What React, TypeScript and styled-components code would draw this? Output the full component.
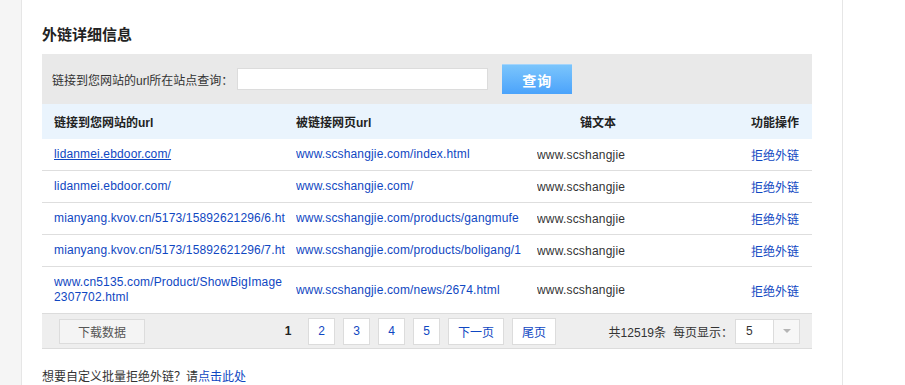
import React, { FC } from 'react';
import styled, { createGlobalStyle } from 'styled-components';

const GlobalStyle = createGlobalStyle`
  html, body {
    margin: 0;
    padding: 0;
    background: #fff;
  }
  body {
    font-family: "Liberation Sans", Arial, "Noto Sans CJK SC", sans-serif;
    font-size: 12px;
    color: #333;
  }
`;

interface ILinkRow {
  source: string;
  target: string;
  anchor: string;
  hovered?: boolean;
}

// urls are shown as the page truncates them
const ROWS: ILinkRow[] = [
  {
    source: 'lidanmei.ebdoor.com/',
    target: 'www.scshangjie.com/index.html',
    anchor: 'www.scshangjie',
    hovered: true,
  },
  {
    source: 'lidanmei.ebdoor.com/',
    target: 'www.scshangjie.com/',
    anchor: 'www.scshangjie',
  },
  {
    source: 'mianyang.kvov.cn/5173/15892621296/6.ht',
    target: 'www.scshangjie.com/products/gangmufe',
    anchor: 'www.scshangjie',
  },
  {
    source: 'mianyang.kvov.cn/5173/15892621296/7.ht',
    target: 'www.scshangjie.com/products/boligang/1',
    anchor: 'www.scshangjie',
  },
  {
    source: 'www.cn5135.com/Product/ShowBigImage2307702.html',
    target: 'www.scshangjie.com/news/2674.html',
    anchor: 'www.scshangjie',
  },
];

const PAGES = ['2', '3', '4', '5', '下一页', '尾页'];

const LINK_BLUE = '#0f47c2';

const Page = styled.div`
  display: flex;
  height: 385px;
  overflow: hidden;
`;

const SideStrip = styled.div`
  width: 21px;
  flex: none;
  background: #f5f5f5;
  border-right: 1px solid #e6e6e6;
`;

const Main = styled.div`
  width: 770px;
  flex: none;
  padding: 25px 30px 0 20px;
  border-right: 1px solid #e6e6e6;
`;

const Title = styled.h2`
  margin: 0 0 9px;
  font-size: 15px;
  line-height: 20px;
  font-weight: bold;
  color: #222;
`;

const SearchBar = styled.div`
  display: flex;
  align-items: center;
  height: 50px;
  padding-left: 10px;
  background: #e9e9e9;
`;

const SearchLabel = styled.label`
  font-size: 12px;
  color: #333;
  margin-right: 4px;
`;

const SearchInput = styled.input`
  box-sizing: border-box;
  width: 251px;
  height: 22px;
  margin: 0;
  padding: 0 4px;
  border: 1px solid #dcdcdc;
  background: #fff;
  outline: none;
`;

const SearchButton = styled.button`
  box-sizing: border-box;
  width: 70px;
  height: 30px;
  margin: 0 0 0 14px;
  padding: 0;
  border: none;
  border-top: 1px solid #a4d5fc;
  background: linear-gradient(#7bc5fc, #4ba3fb);
  color: #fff;
  font-family: "Liberation Sans", "Noto Sans CJK SC", sans-serif;
  font-size: 14px;
  font-weight: bold;
  letter-spacing: 1px;
  cursor: pointer;
`;

const Row = styled.div<{ $header?: boolean; $tall?: boolean }>`
  display: grid;
  grid-template-columns: 232px 231px 122px 1fr;
  column-gap: 10px;
  align-items: center;
  padding: 0 13px 0 12px;
  height: ${(p) => (p.$header ? '35px' : p.$tall ? '46px' : '31px')};
  background: ${(p) => (p.$header ? '#eaf4fd' : '#fff')};
  border-bottom: ${(p) => (p.$header ? 'none' : '1px solid #dedede')};
  font-weight: ${(p) => (p.$header ? 'bold' : 'normal')};
  color: #333;
`;

const Cell = styled.div<{ $align?: 'left' | 'center' | 'right' }>`
  min-width: 0;
  text-align: ${(p) => p.$align || 'left'};
  overflow: hidden;
`;

const UrlCell = styled(Cell)<{ $wrap?: boolean }>`
  white-space: ${(p) => (p.$wrap ? 'normal' : 'nowrap')};
  word-break: break-all;
  letter-spacing: 0.15px;
  line-height: 15px;
`;

const PlainCell = styled(Cell)`
  white-space: nowrap;
  letter-spacing: 0.2px;
  color: #333;
`;

const HeaderCell = styled(Cell)`
  font-family: "Liberation Sans", "Noto Sans CJK SC", sans-serif;
  color: #222;
`;

const Link = styled.a<{ $underline?: boolean }>`
  color: ${LINK_BLUE};
  text-decoration: ${(p) => (p.$underline ? 'underline' : 'none')};
  cursor: pointer;
`;

const Pager = styled.div`
  display: flex;
  align-items: center;
  height: 34px;
  padding: 0 12px 0 17px;
  background: #eeeeee;
  border-bottom: 1px solid #dcdcdc;
  border-top: 1px solid #dcdcdc;
  margin-top: -1px;
`;

const DownloadButton = styled.button`
  box-sizing: border-box;
  width: 86px;
  height: 25px;
  margin: 0 131px 0 0;
  padding: 0;
  border: 1px solid #dcdcdc;
  background: #f4f4f4;
  color: #555;
  font-family: "Liberation Sans", "Noto Sans CJK SC", sans-serif;
  font-size: 12px;
`;

const PageList = styled.div`
  display: flex;
  align-items: center;
  gap: 8px;
`;

const CurrentPage = styled.span`
  width: 24px;
  text-align: center;
  font-weight: bold;
  color: #222;
`;

const PageButton = styled.a`
  box-sizing: border-box;
  min-width: 27px;
  height: 27px;
  padding: 0 9px;
  display: flex;
  align-items: center;
  justify-content: center;
  background: #fff;
  border: 1px solid #dcdcdc;
  color: ${LINK_BLUE};
  cursor: pointer;
`;

const Stats = styled.div`
  margin-left: auto;
  display: flex;
  align-items: center;
  color: #333;
`;

const Total = styled.span`
  margin-right: 7px;
`;

const Select = styled.div`
  display: flex;
  box-sizing: border-box;
  width: 65px;
  height: 25px;
  margin-left: 2px;
  border: 1px solid #dcdcdc;
  background: #fff;
`;

const SelectValue = styled.span`
  width: 38px;
  padding-left: 10px;
  box-sizing: border-box;
  line-height: 23px;
  border-right: 1px solid #dcdcdc;
  color: #333;
`;

const SelectArrow = styled.span`
  flex: 1;
  display: flex;
  align-items: center;
  justify-content: center;
  background: #f7f7f7;

  &::after {
    content: '';
    border-left: 4px solid transparent;
    border-right: 4px solid transparent;
    border-top: 4px solid #b5b5b5;
  }
`;

const Footer = styled.p`
  margin: 19px 0 0;
  line-height: 18px;
  font-size: 12px;
  color: #333;
`;

const LinkTableRow: FC<{ row: ILinkRow; tall?: boolean }> = ({ row, tall }) => (
  <Row $tall={tall}>
    <UrlCell $wrap={tall}>
      <Link $underline={row.hovered}>{row.source}</Link>
    </UrlCell>
    <UrlCell>
      <Link>{row.target}</Link>
    </UrlCell>
    <PlainCell>{row.anchor}</PlainCell>
    <Cell $align="right">
      <Link>拒绝外链</Link>
    </Cell>
  </Row>
);

const App: FC = () => (
  <>
    <GlobalStyle />
    <Page>
      <SideStrip />
      <Main>
        <Title>外链详细信息</Title>
        <SearchBar>
          <SearchLabel>链接到您网站的url所在站点查询：</SearchLabel>
          <SearchInput type="text" />
          <SearchButton>查询</SearchButton>
        </SearchBar>
        <Row $header>
          <HeaderCell>链接到您网站的url</HeaderCell>
          <HeaderCell>被链接网页url</HeaderCell>
          <HeaderCell $align="center">锚文本</HeaderCell>
          <HeaderCell $align="right">功能操作</HeaderCell>
        </Row>
        {ROWS.map((row, i) => (
          <LinkTableRow key={i} row={row} tall={i === ROWS.length - 1} />
        ))}
        <Pager>
          <DownloadButton>下载数据</DownloadButton>
          <PageList>
            <CurrentPage>1</CurrentPage>
            {PAGES.map((p) => (
              <PageButton key={p}>{p}</PageButton>
            ))}
          </PageList>
          <Stats>
            <Total>共12519条</Total>
            <span>每页显示：</span>
            <Select>
              <SelectValue>5</SelectValue>
              <SelectArrow />
            </Select>
          </Stats>
        </Pager>
        <Footer>
          想要自定义批量拒绝外链？请<Link>点击此处</Link>
        </Footer>
      </Main>
    </Page>
  </>
);

export default App;
